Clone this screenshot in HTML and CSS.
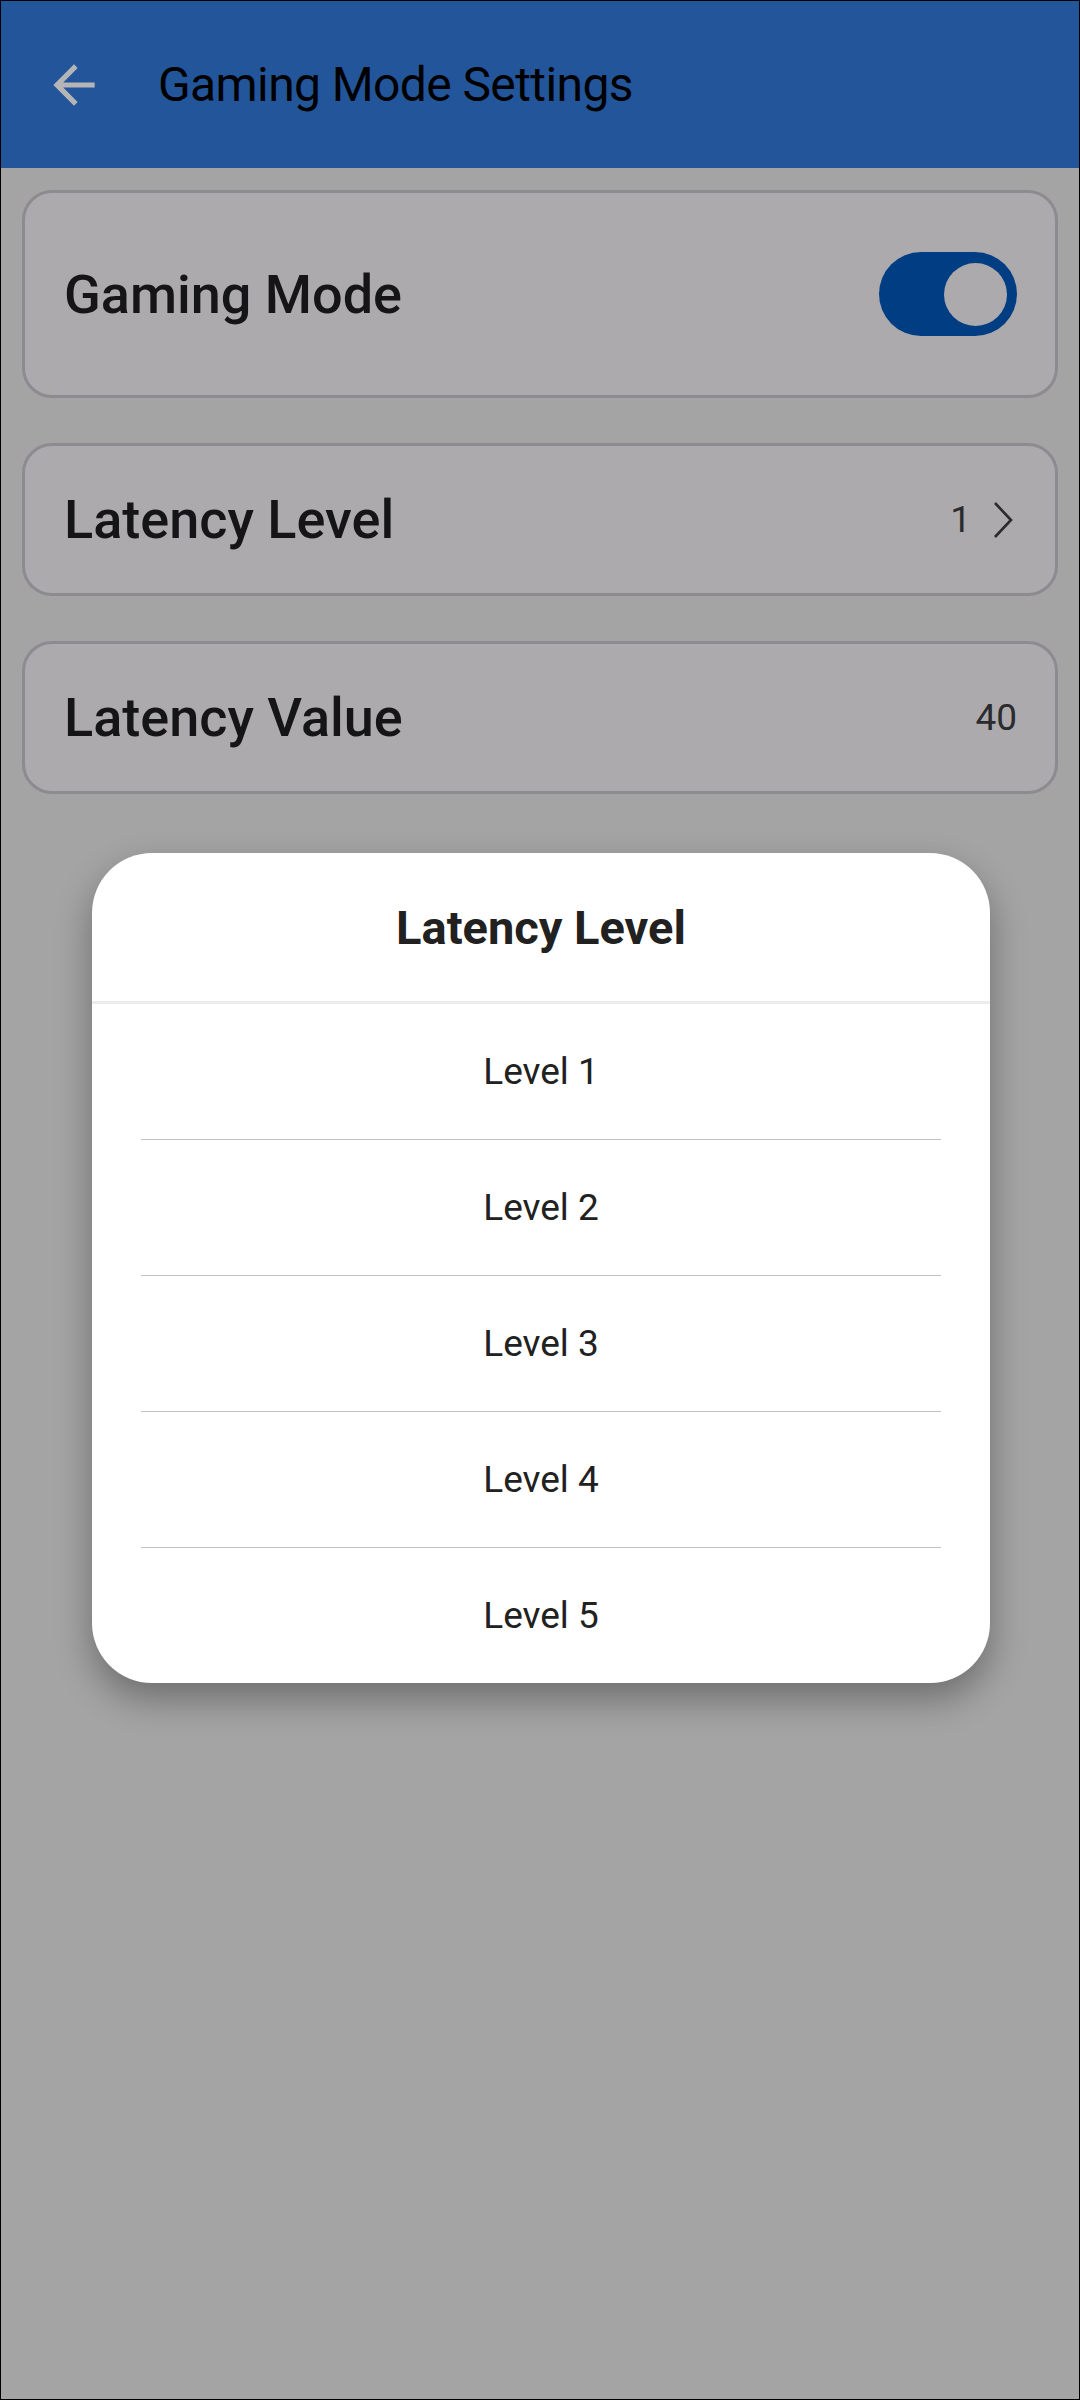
FILE: index.html
```html
<!DOCTYPE html>
<html>
<head>
<title>Gaming Mode Settings</title>
<meta name="viewport" content="width=device-width, initial-scale=1">
<link rel="stylesheet" href="styles.css">
</head>
<body>
    <div class="screen">
        <header class="app-bar">
            <button class="back-btn" aria-label="Back">
                <svg viewBox="0 0 24 24" width="62" height="62">
                    <path d="M20 11H7.830l5.59-5.59L12 4l-8 8 8 8 1.41-1.41L7.830 13H20v-2z" fill="#b5b5b7"/>
                </svg>
            </button>
            <h1 class="app-title">Gaming Mode Settings</h1>
        </header>

        <main class="settings">
            <div class="card card-tall">
                <span class="card-label">Gaming Mode</span>
                <div class="toggle on">
                    <span class="thumb"></span>
                </div>
            </div>

            <div class="card">
                <span class="card-label">Latency Level</span>
                <div class="card-value">
                    <span>1</span>
                    <svg class="chevron" viewBox="0 0 24 40" width="24" height="40">
                        <path d="M4 3l16 17L4 37" fill="none" stroke="#2b2a2c" stroke-width="2.6"/>
                    </svg>
                </div>
            </div>

            <div class="card">
                <span class="card-label">Latency Value</span>
                <div class="card-value">
                    <span>40</span>
                </div>
            </div>
        </main>

        <!-- level picker dialog, opened over the settings list -->
        <div class="dialog">
            <div class="dialog-title">Latency Level</div>
            <ul class="level-list">
                <li>Level 1</li>
                <li>Level 2</li>
                <li>Level 3</li>
                <li>Level 4</li>
                <li>Level 5</li>
            </ul>
        </div>
    </div>
</body>
</html>
```

FILE: styles.css
```css
*{
    box-sizing: border-box;
}

body{
    margin: 0;
    font-family: Roboto, "Noto Sans", sans-serif;
}

.screen{
    position: relative;
    width: 1080px;
    height: 2400px;
    border: 1px solid #000;
    background-color: #a4a4a4;
    overflow: hidden;
}

.app-bar{
    display: flex;
    align-items: center;
    height: 167px;
    background-color: #23559a;
}

.back-btn{
    display: flex;
    margin-left: 42px;
    padding: 0;
    border: 0;
    background: none;
}

.app-title{
    margin: 0 0 0 53px;
    font-size: 48px;
    font-weight: 400;
    letter-spacing: -0.6px;
    color: #000;
}

.settings{
    display: flex;
    flex-direction: column;
    gap: 45px;
    padding: 22px 21px 0 21px;
}

.card{
    display: flex;
    align-items: center;
    justify-content: space-between;
    height: 153px;
    padding: 0 38px 0 39px;
    border: 3px solid #8d8b90;
    border-radius: 30px;
    background-color: #acaaad;
}

.card-tall{
    height: 208px;
}

.card-label{
    font-size: 54px;
    font-weight: 500;
    color: #151416;
}

.card-value{
    display: flex;
    align-items: center;
    gap: 20px;
    font-size: 37px;
    color: #2b2a2c;
}

.chevron{
    margin-right: 2px;
}

.toggle{
    display: flex;
    align-items: center;
    justify-content: flex-end;
    width: 138px;
    height: 84px;
    padding: 0 10px;
    border-radius: 42px;
    background-color: #003d82;
}

.thumb{
    width: 63px;
    height: 63px;
    border-radius: 50%;
    background-color: #acaaad;
}

.dialog{
    position: absolute;
    left: 91px;
    top: 852px;
    width: 898px;
    border-radius: 60px;
    background-color: #fff;
    box-shadow: 0 16px 36px rgba(0, 0, 0, 0.33);
    overflow: hidden;
}

.dialog-title{
    height: 151px;
    display: flex;
    align-items: center;
    justify-content: center;
    border-bottom: 3px solid #ececec;
    font-size: 47px;
    font-weight: 700;
    color: #212121;
}

.level-list{
    list-style: none;
    margin: 0;
    padding: 0 49px;
}

.level-list li{
    display: flex;
    align-items: center;
    justify-content: center;
    height: 136px;
    border-bottom: 1px solid #c2c2c2;
    font-size: 37px;
    color: #212121;
}

.level-list li:last-child{
    height: 135px;
    border-bottom: 0;
}
```
